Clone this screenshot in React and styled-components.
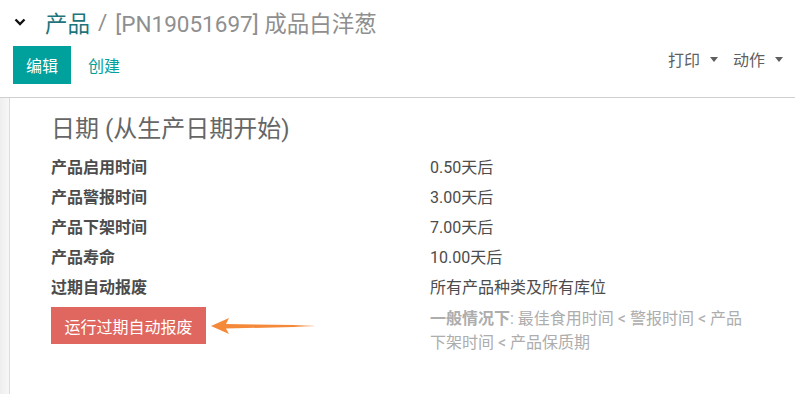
import React from 'react';
import styled, { createGlobalStyle } from 'styled-components';

const GlobalStyle = createGlobalStyle`
  html, body {
    margin: 0;
    padding: 0;
    background: #fff;
  }
  body {
    font-family: Roboto, "Noto Sans CJK SC", sans-serif;
    color: #4c4c4c;
  }
`;

const Page = styled.div`
  width: 795px;
  height: 394px;
  display: flex;
  flex-direction: column;
  overflow: hidden;
`;

const ControlPanel = styled.div`
  padding: 0 12px 13px 13px;
  border-bottom: 1px solid #cfcfcf;
`;

const Breadcrumb = styled.div`
  display: flex;
  align-items: center;
  height: 44px;
  font-size: 22.5px;
  color: #8f8f8f;
`;

const Toggle = styled.span`
  display: inline-flex;
  width: 31px;
  padding-left: 1px;
`;

const CrumbLink = styled.span`
  color: #1d747a;
`;

const Sep = styled.span`
  margin: 0 8px;
`;

const ButtonRow = styled.div`
  display: flex;
  align-items: flex-start;
  justify-content: space-between;
  margin-top: 2px;
`;

const ButtonGroup = styled.div`
  display: flex;
  align-items: center;
`;

const PrimaryButton = styled.button`
  background: #00a09d;
  color: #fff;
  border: none;
  border-radius: 0;
  height: 38px;
  padding: 0 13px;
  font: inherit;
  font-size: 16px;
  cursor: pointer;
`;

const LinkButton = styled.button`
  background: none;
  border: none;
  color: #00a09d;
  font: inherit;
  font-size: 16px;
  padding: 0 13px;
  margin-left: 4px;
  height: 38px;
`;

const Dropdown = styled.button`
  display: inline-flex;
  align-items: center;
  gap: 10px;
  background: none;
  border: none;
  color: #5f5f5f;
  font: inherit;
  font-size: 16px;
  padding: 0;
  margin-left: ${({ $first }) => ($first ? '0' : '15px')};
  height: 26px;
`;

const Caret = styled.span`
  width: 0;
  height: 0;
  border-left: 4.5px solid transparent;
  border-right: 4.5px solid transparent;
  border-top: 5px solid #5f5f5f;
`;

const Content = styled.div`
  flex: 1;
  display: flex;
`;

const Gutter = styled.div`
  width: 9px;
  background: linear-gradient(to right, #eeeeee, #f7f7f7);
`;

const Sheet = styled.div`
  flex: 1;
  border-left: 1px solid #dcdcdc;
  padding: 17px 12px 0 41px;
  background: #fff;
`;

const Title = styled.h2`
  margin: 0 0 9px 0;
  font-size: 24px;
  font-weight: 400;
  line-height: 29px;
  color: #666;
`;

const FieldGrid = styled.div`
  display: grid;
  grid-template-columns: 379px 1fr;
  font-size: 16px;
`;

const Label = styled.div`
  font-weight: 700;
  color: #4c4c4c;
  line-height: 30px;
`;

const Value = styled.div`
  color: #4c4c4c;
  line-height: 30px;
`;

const ActionCell = styled.div`
  display: flex;
  align-items: center;
  margin-top: 4px;
  height: 37px;
`;

const DangerButton = styled.button`
  background: #e0675f;
  color: #fff;
  border: none;
  height: 37px;
  padding: 0 13.5px;
  font: inherit;
  font-size: 16px;
`;

const Help = styled.div`
  margin-top: 4px;
  color: #adadad;
  line-height: 24px;
  max-width: 320px;
`;

const Strong = styled.b`
  font-weight: 700;
`;

const ChevronDown = () => (
  <svg width="12" height="8" viewBox="0 0 12 8">
    <polyline points="1.5,1.5 6,6 10.5,1.5" fill="none" stroke="#111" strokeWidth="2.4" />
  </svg>
);

const Arrow = () => (
  <svg width="110" height="20" viewBox="0 0 110 20" style={{ marginLeft: 4 }}>
    <defs>
      <linearGradient id="tail" x1="0" x2="1" y1="0" y2="0">
        <stop offset="0" stopColor="#f5893a" />
        <stop offset="0.8" stopColor="#f5893a" />
        <stop offset="1" stopColor="#f5893a" stopOpacity="0.2" />
      </linearGradient>
    </defs>
    <polygon points="1,10 19,2 16,8 104,9.2 104,10.6 16,12.5 19,18" fill="url(#tail)" />
  </svg>
);

const fields = [
  ['产品启用时间', '0.50天后'],
  ['产品警报时间', '3.00天后'],
  ['产品下架时间', '7.00天后'],
  ['产品寿命', '10.00天后'],
  ['过期自动报废', '所有产品种类及所有库位'],
];

export default function App() {
  return (
    <Page>
      <GlobalStyle />
      <ControlPanel>
        <Breadcrumb>
          <Toggle><ChevronDown /></Toggle>
          <CrumbLink>产品</CrumbLink>
          <Sep>/</Sep>
          <span>[PN19051697] 成品白洋葱</span>
        </Breadcrumb>
        <ButtonRow>
          <ButtonGroup>
            <PrimaryButton>编辑</PrimaryButton>
            <LinkButton>创建</LinkButton>
          </ButtonGroup>
          <ButtonGroup>
            <Dropdown $first>打印<Caret /></Dropdown>
            <Dropdown>动作<Caret /></Dropdown>
          </ButtonGroup>
        </ButtonRow>
      </ControlPanel>
      <Content>
        <Gutter />
        <Sheet>
          <Title>日期 (从生产日期开始)</Title>
          <FieldGrid>
            {fields.map(([label, value]) => (
              <React.Fragment key={label}>
                <Label>{label}</Label>
                <Value>{value}</Value>
              </React.Fragment>
            ))}
            <ActionCell>
              <DangerButton>运行过期自动报废</DangerButton>
              <Arrow />
            </ActionCell>
            <Help>
              <Strong>一般情况下</Strong>: 最佳食用时间 &lt; 警报时间 &lt; 产品下架时间 &lt; 产品保质期
            </Help>
          </FieldGrid>
        </Sheet>
      </Content>
    </Page>
  );
}
